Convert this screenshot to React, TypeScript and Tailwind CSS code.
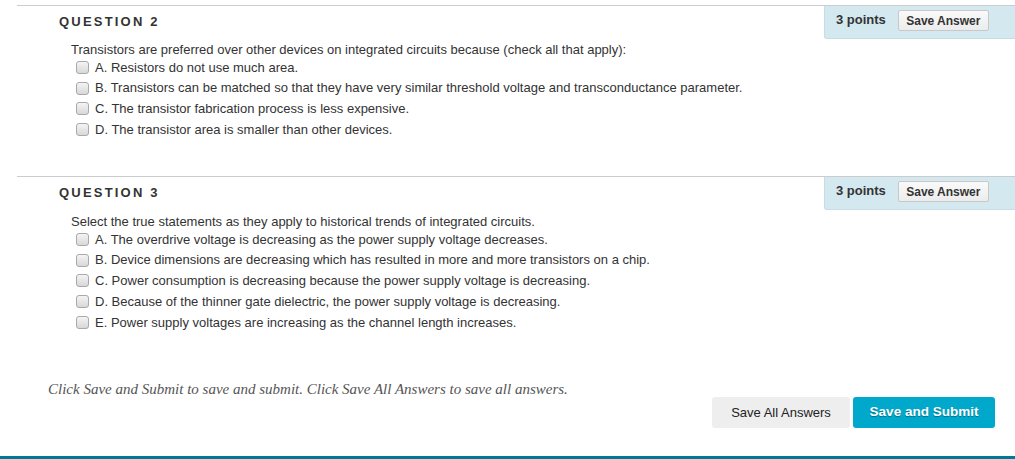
import React from 'react';

type Question = {
  number: number;
  prompt: string;
  options: string[];
  bodyOffset: string;
};

const questions: Question[] = [
  {
    number: 2,
    prompt:
      'Transistors are preferred over other devices on integrated circuits because (check all that apply):',
    options: [
      'A. Resistors do not use much area.',
      'B. Transistors can be matched so that they have very similar threshold voltage and transconductance parameter.',
      'C. The transistor fabrication process is less expensive.',
      'D. The transistor area is smaller than other devices.',
    ],
    bodyOffset: 'mt-[3px]',
  },
  {
    number: 3,
    prompt: 'Select the true statements as they apply to historical trends of integrated circuits.',
    options: [
      'A. The overdrive voltage is decreasing as the power supply voltage decreases.',
      'B. Device dimensions are decreasing which has resulted in more and more transistors on a chip.',
      'C. Power consumption is decreasing because the power supply voltage is decreasing.',
      'D. Because of the thinner gate dielectric, the power supply voltage is decreasing.',
      'E. Power supply voltages are increasing as the channel length increases.',
    ],
    bodyOffset: 'mt-[4px]',
  },
];

function Checkbox() {
  return (
    <span className="inline-block w-[13px] h-[13px] rounded-[3px] border border-[#a9a9a9] bg-gradient-to-b from-[#f4f4f4] to-[#d8d8d8] shrink-0" />
  );
}

function QuestionBlock({ q }: { q: Question }) {
  return (
    <div className="border-t border-[#cccccc] pb-[36px]">
      <div className="flex justify-between h-[33px]">
        <div className="pl-[42px] pt-[6px] text-[13px] font-bold tracking-[2.2px] text-[#333333]">
          QUESTION {q.number}
        </div>
        <div className="w-[191px] bg-[#d4e9ef] border-l border-b border-[#c6dde4] rounded-bl-[3px] flex items-start pl-[11px] pt-[4px] gap-[12px]">
          <span className="text-[13px] font-bold text-[#333333] leading-[15px] pt-[2px]">3 points</span>
          <button
            type="button"
            className="h-[21px] w-[91px] border border-[#c8c8c8] rounded-[2px] bg-gradient-to-b from-[#fafafa] to-[#ececec] text-[12px] font-bold text-[#333333]"
          >
            Save Answer
          </button>
        </div>
      </div>
      <div className={`pl-[54px] ${q.bodyOffset} text-[13px] leading-[15px] text-[#333333]`}>{q.prompt}</div>
      <div className="pl-[59px]">
        {q.options.map((o) => (
          <div key={o} className="h-[20.75px] flex items-center gap-[6px] text-[13px] text-[#333333]">
            <Checkbox />
            <span>{o}</span>
          </div>
        ))}
      </div>
    </div>
  );
}

export default function App() {
  return (
    <div
      className="w-[1015px] h-[459px] bg-white flex flex-col overflow-hidden"
      style={{ fontFamily: '"Liberation Sans", Arial, sans-serif' }}
    >
      <div className="pt-[5px] pl-[17px]">
        {questions.map((q) => (
          <QuestionBlock key={q.number} q={q} />
        ))}
      </div>
      <div
        className="pl-[48px] mt-[11px] italic text-[15px] leading-[18px] text-[#555555]"
        style={{ fontFamily: '"Liberation Serif", Georgia, serif' }}
      >
        Click Save and Submit to save and submit. Click Save All Answers to save all answers.
      </div>
      <div className="flex justify-end gap-[3px] pr-[20px] -mt-[1px]">
        <button
          type="button"
          className="w-[138px] h-[31px] rounded-[3px] bg-[#eeeeee] text-[13px] text-[#222222]"
        >
          Save All Answers
        </button>
        <button
          type="button"
          className="w-[142px] h-[31px] rounded-[3px] bg-[#00a9cc] text-[13.5px] font-bold text-white [text-shadow:0_1px_1px_rgba(0,0,0,0.35)]"
        >
          Save and Submit
        </button>
      </div>
      <div className="mt-auto h-[3px] bg-[#007a92]" />
    </div>
  );
}
